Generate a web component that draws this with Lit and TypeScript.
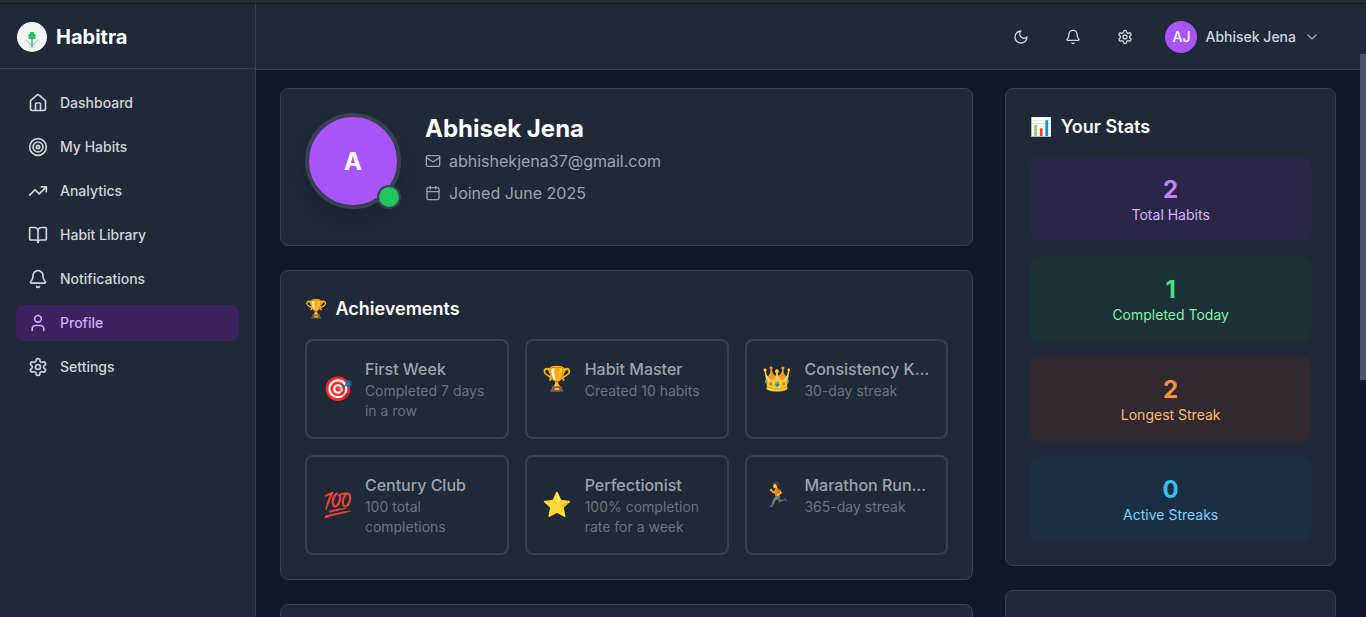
import { LitElement, html, css, svg } from 'lit';
import { customElement } from 'lit/decorators.js';

const icon = (body: unknown, size = 20, width = 2) => html`<svg
  xmlns="http://www.w3.org/2000/svg" width=${size} height=${size} viewBox="0 0 24 24" fill="none"
  stroke="currentColor" stroke-width=${width} stroke-linecap="round" stroke-linejoin="round">${body}</svg>`;

const icons = {
  home: svg`<path d="M15 21v-8a1 1 0 0 0-1-1h-4a1 1 0 0 0-1 1v8"/><path d="M3 10a2 2 0 0 1 .709-1.528l7-5.999a2 2 0 0 1 2.582 0l7 5.999A2 2 0 0 1 21 10v9a2 2 0 0 1-2 2H5a2 2 0 0 1-2-2z"/>`,
  target: svg`<circle cx="12" cy="12" r="10"/><circle cx="12" cy="12" r="6"/><circle cx="12" cy="12" r="2"/>`,
  trending: svg`<polyline points="22 7 13.5 15.5 8.5 10.5 2 17"/><polyline points="16 7 22 7 22 13"/>`,
  book: svg`<path d="M12 7v14"/><path d="M3 18a1 1 0 0 1-1-1V4a1 1 0 0 1 1-1h5a4 4 0 0 1 4 4 4 4 0 0 1 4-4h5a1 1 0 0 1 1 1v13a1 1 0 0 1-1 1h-6a3 3 0 0 0-3 3 3 3 0 0 0-3-3z"/>`,
  bell: svg`<path d="M10.268 21a2 2 0 0 0 3.464 0"/><path d="M3.262 15.326A1 1 0 0 0 4 17h16a1 1 0 0 0 .74-1.673C19.41 13.956 18 12.499 18 8A6 6 0 0 0 6 8c0 4.499-1.411 5.956-2.738 7.326"/>`,
  user: svg`<path d="M19 21v-2a4 4 0 0 0-4-4H9a4 4 0 0 0-4 4v2"/><circle cx="12" cy="7" r="4"/>`,
  gear: svg`<path d="M12.22 2h-.44a2 2 0 0 0-2 2v.18a2 2 0 0 1-1 1.73l-.43.25a2 2 0 0 1-2 0l-.15-.08a2 2 0 0 0-2.73.73l-.22.38a2 2 0 0 0 .73 2.73l.15.1a2 2 0 0 1 1 1.72v.51a2 2 0 0 1-1 1.74l-.15.09a2 2 0 0 0-.73 2.73l.22.38a2 2 0 0 0 2.73.73l.15-.08a2 2 0 0 1 2 0l.43.25a2 2 0 0 1 1 1.73V20a2 2 0 0 0 2 2h.44a2 2 0 0 0 2-2v-.18a2 2 0 0 1 1-1.73l.43-.25a2 2 0 0 1 2 0l.15.08a2 2 0 0 0 2.73-.73l.22-.39a2 2 0 0 0-.73-2.73l-.15-.08a2 2 0 0 1-1-1.74v-.5a2 2 0 0 1 1-1.74l.15-.09a2 2 0 0 0 .73-2.73l-.22-.38a2 2 0 0 0-2.73-.73l-.15.08a2 2 0 0 1-2 0l-.43-.25a2 2 0 0 1-1-1.73V4a2 2 0 0 0-2-2z"/><circle cx="12" cy="12" r="3"/>`,
  moon: svg`<path d="M12 3a6 6 0 0 0 9 9 9 9 0 1 1-9-9Z"/>`,
  chevron: svg`<path d="m6 9 6 6 6-6"/>`,
  mail: svg`<rect width="20" height="16" x="2" y="4" rx="2"/><path d="m22 7-8.97 5.7a1.94 1.94 0 0 1-2.06 0L2 7"/>`,
  calendar: svg`<path d="M8 2v4"/><path d="M16 2v4"/><rect width="18" height="18" x="3" y="4" rx="2"/><path d="M3 10h18"/>`,
};

const nav = [
  { label: 'Dashboard', icon: icons.home },
  { label: 'My Habits', icon: icons.target },
  { label: 'Analytics', icon: icons.trending },
  { label: 'Habit Library', icon: icons.book },
  { label: 'Notifications', icon: icons.bell },
  { label: 'Profile', icon: icons.user, active: true },
  { label: 'Settings', icon: icons.gear },
];

const achievements = [
  { emoji: '🎯', title: 'First Week', desc: 'Completed 7 days in a row' },
  { emoji: '🏆', title: 'Habit Master', desc: 'Created 10 habits' },
  { emoji: '👑', title: 'Consistency King', desc: '30-day streak' },
  { emoji: '💯', title: 'Century Club', desc: '100 total completions' },
  { emoji: '⭐', title: 'Perfectionist', desc: '100% completion rate for a week' },
  { emoji: '🏃', title: 'Marathon Runner', desc: '365-day streak' },
];

const stats = [
  { value: '2', label: 'Total Habits', tone: 'purple' },
  { value: '1', label: 'Completed Today', tone: 'green' },
  { value: '2', label: 'Longest Streak', tone: 'orange' },
  { value: '0', label: 'Active Streaks', tone: 'blue' },
];

@customElement('app-root')
export class AppRoot extends LitElement {
  static styles = css`
    :host {
      display: block;
      height: 617px;
      overflow: hidden;
      background: #111827;
      font-family: Inter, "Liberation Sans", "Noto Color Emoji", sans-serif;
      color: #fff;
    }
    .strip { height: 4px; background: #2b2b2b; border-bottom: 1px solid #1a1a1a; box-sizing: border-box; }
    .shell { display: flex; height: 613px; }

    .sidebar {
      width: 256px;
      flex: none;
      box-sizing: border-box;
      background: #1f2937;
      border-right: 1px solid #374151;
    }
    .brand {
      height: 65px;
      box-sizing: border-box;
      display: flex;
      align-items: center;
      gap: 9px;
      padding: 1px 17px 0;
      border-bottom: 1px solid #374151;
      font-size: 20px;
      font-weight: 700;
    }
    .logo {
      width: 30px;
      height: 30px;
      border-radius: 50%;
      background: #f0f4f2;
      display: block;
    }
    .nav { display: flex; flex-direction: column; gap: 8px; padding: 16px; }
    .nav-item {
      display: flex;
      align-items: center;
      gap: 12px;
      height: 36px;
      padding: 0 12px;
      border-radius: 8px;
      font-size: 14px;
      line-height: 20px;
      font-weight: 500;
      color: #d1d5db;
    }
    .nav-item.active { background: rgba(88, 28, 135, 0.5); color: #d8a8fc; }

    .content { flex: 1; min-width: 0; display: flex; flex-direction: column; position: relative; }
    .topbar {
      height: 66px;
      flex: none;
      box-sizing: border-box;
      display: flex;
      align-items: center;
      justify-content: flex-end;
      gap: 16px;
      padding: 0 46px 0 0;
      background: #1f2937;
      border-bottom: 1px solid #374151;
    }
    .tool { width: 36px; height: 36px; display: flex; align-items: center; justify-content: center; color: #d1d5db; }
    .account { display: flex; align-items: center; gap: 8px; font-size: 14px; font-weight: 500; color: #d1d5db; margin-left: 6px; }
    .account .chevron { color: #9ca3af; display: flex; }
    .avatar-sm {
      width: 32px;
      height: 32px;
      border-radius: 50%;
      background: #a855f7;
      color: #fff;
      display: flex;
      align-items: center;
      justify-content: center;
    }
    .scrollbar { position: absolute; top: 50px; right: 0; width: 6px; height: 326px; background: #4b5563; }

    .main {
      flex: 1;
      min-height: 0;
      overflow: hidden;
      display: grid;
      grid-template-columns: repeat(3, minmax(0, 1fr));
      gap: 32px;
      align-items: start;
      padding: 18px 30px 0 24px;
    }
    .col { display: flex; flex-direction: column; gap: 24px; }
    .col.wide { grid-column: span 2; }
    .card {
      background: #1f2937;
      border: 1px solid #374151;
      border-radius: 8px;
      padding: 24px;
    }
    .stub { height: 60px; }

    .profile { display: flex; gap: 24px; padding-bottom: 36px; }
    .avatar {
      position: relative;
      width: 96px;
      height: 96px;
      flex: none;
      box-sizing: border-box;
      border: 4px solid #374151;
      border-radius: 50%;
      background: #a855f7;
      display: flex;
      align-items: center;
      justify-content: center;
      font-size: 24px;
      font-weight: 700;
      box-shadow: 0 10px 15px rgba(0, 0, 0, 0.1);
    }
    .status {
      position: absolute;
      right: -4px;
      bottom: -4px;
      width: 24px;
      height: 24px;
      box-sizing: border-box;
      border: 2px solid #374151;
      border-radius: 50%;
      background: #22c55e;
    }
    .name { margin: 0 0 4px; font-size: 24px; line-height: 32px; font-weight: 700; }
    .meta { display: flex; align-items: center; gap: 8px; height: 24px; margin-top: 8px; font-size: 16px; color: #9ca3af; }
    .meta:first-of-type { margin-top: 0; }

    .heading { display: flex; align-items: center; gap: 8px; margin: 0 0 16px; font-size: 18px; line-height: 28px; font-weight: 600; }

    .achievements { display: grid; grid-template-columns: repeat(3, minmax(0, 1fr)); gap: 16px; }
    .tile { border: 2px solid #374151; border-radius: 8px; padding: 16px; }
    .tile-row { display: flex; align-items: center; gap: 12px; }
    .emoji { font-size: 24px; line-height: 32px; flex: none; }
    .tile-text { min-width: 0; flex: 1; }
    .tile-title {
      font-size: 16px;
      line-height: 24px;
      font-weight: 500;
      color: #9ca3af;
      white-space: nowrap;
      overflow: hidden;
      text-overflow: ellipsis;
    }
    .tile-desc { font-size: 14px; line-height: 20px; color: #6b7280; }

    .stats { display: flex; flex-direction: column; gap: 16px; }
    .stat { border-radius: 8px; padding: 16px; text-align: center; }
    .stat-value { font-size: 24px; line-height: 34px; margin-bottom: -2px; font-weight: 700; }
    .stat-label { font-size: 14px; line-height: 20px; }
    .purple { background: rgba(88, 28, 135, 0.2); color: #d8b4fe; }
    .purple .stat-value { color: #c084fc; }
    .green { background: rgba(20, 83, 45, 0.2); color: #86efac; }
    .green .stat-value { color: #4ade80; }
    .orange { background: rgba(124, 45, 18, 0.2); color: #fdba74; }
    .orange .stat-value { color: #fb923c; }
    .blue { background: rgba(12, 74, 110, 0.2); color: #7dd3fc; }
    .blue .stat-value { color: #38bdf8; }
  `;

  render() {
    return html`
      <div class="strip"></div>
      <div class="shell">
        <aside class="sidebar">
          <div class="brand">
            <svg class="logo" viewBox="0 0 30 30">
              <path d="M9.500 18 14.500 24M20.500 18 15.500 24" fill="none" stroke="#c4a5f5" stroke-width="1"/>
              <rect x="14.200" y="16" width="1.600" height="10" fill="#3fb98a"/>
              <path d="M13 10h4v2h1.500v5h-7v-5H13z" fill="#22c55e"/>
              <rect x="12" y="25" width="6" height="1" fill="#b7e4c7"/>
            </svg>
            Habitra
          </div>
          <nav class="nav">
            ${nav.map(n => html`<div class="nav-item ${n.active ? 'active' : ''}">${icon(n.icon)}<span>${n.label}</span></div>`)}
          </nav>
        </aside>
        <div class="content">
          <header class="topbar">
            <div class="tool">${icon(icons.moon, 16)}</div>
            <div class="tool">${icon(icons.bell, 16)}</div>
            <div class="tool">${icon(icons.gear, 16)}</div>
            <div class="account">
              <span class="avatar-sm">AJ</span>
              <span>Abhisek Jena</span>
              <span class="chevron">${icon(icons.chevron, 16)}</span>
            </div>
          </header>
          <div class="scrollbar"></div>
          <main class="main">
            <div class="col wide">
              <section class="card profile">
                <div class="avatar">A<span class="status"></span></div>
                <div>
                  <h1 class="name">Abhisek Jena</h1>
                  <div class="meta">${icon(icons.mail, 16)}abhishekjena37@gmail.com</div>
                  <div class="meta">${icon(icons.calendar, 16)}Joined June 2025</div>
                </div>
              </section>
              <section class="card">
                <h2 class="heading"><span>🏆</span>Achievements</h2>
                <div class="achievements">
                  ${achievements.map(a => html`
                    <div class="tile">
                      <div class="tile-row">
                        <span class="emoji">${a.emoji}</span>
                        <div class="tile-text">
                          <div class="tile-title">${a.title}</div>
                          <div class="tile-desc">${a.desc}</div>
                        </div>
                      </div>
                    </div>
                  `)}
                </div>
              </section>
              <section class="card stub"></section>
            </div>
            <div class="col">
              <section class="card">
                <h2 class="heading"><span>📊</span>Your Stats</h2>
                <div class="stats">
                  ${stats.map(s => html`
                    <div class="stat ${s.tone}">
                      <div class="stat-value">${s.value}</div>
                      <div class="stat-label">${s.label}</div>
                    </div>
                  `)}
                </div>
              </section>
              <section class="card stub"></section>
            </div>
          </main>
        </div>
      </div>
    `;
  }
}
